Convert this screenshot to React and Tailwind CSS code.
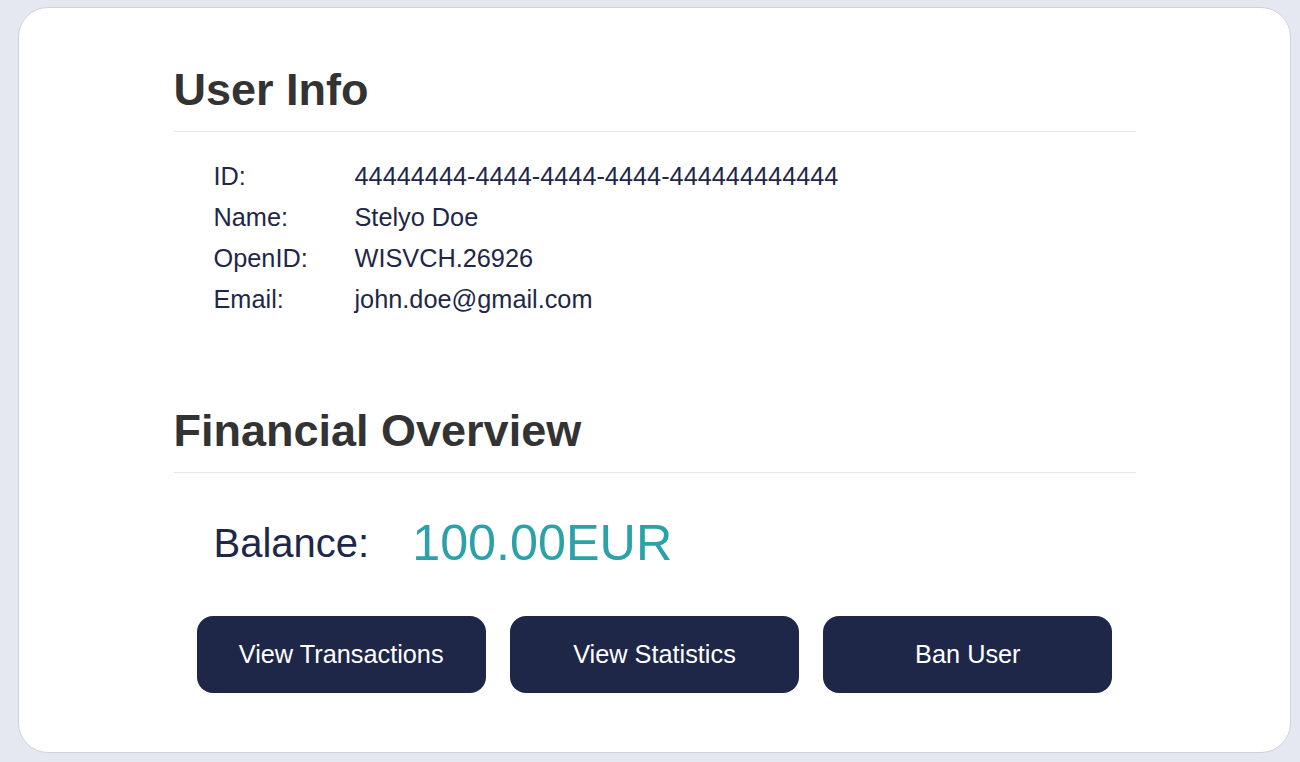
const userRows = [
  { label: 'ID:', value: '44444444-4444-4444-4444-444444444444' },
  { label: 'Name:', value: 'Stelyo Doe' },
  { label: 'OpenID:', value: 'WISVCH.26926' },
  { label: 'Email:', value: 'john.doe@gmail.com' },
];

const actions = ['View Transactions', 'View Statistics', 'Ban User'];

function SectionTitle({ children }) {
  return (
    <h2 className="border-b border-[#e4e7ec] pb-[15px] text-[45px] font-bold leading-[52px] text-[#333333]">
      {children}
    </h2>
  );
}

export default function App() {
  return (
    <div
      className="h-[762px] w-[1300px] overflow-hidden bg-[#e5e8f0] pb-[9px] pl-[18px] pr-[9px] pt-[7px]"
      style={{ fontFamily: '"Liberation Sans", Arial, sans-serif' }}
    >
      <div className="h-[746px] rounded-[30px] border border-[#cfd3da] bg-white pt-[56px]">
        <div className="mx-auto w-[962px]">
          <SectionTitle>User Info</SectionTitle>
          <div className="mt-[24px] pl-[40px] text-[25.3px] leading-[41px] text-[#1f2749]">
            {userRows.map((row) => (
              <div key={row.label} className="flex">
                <span className="w-[141px] shrink-0">{row.label}</span>
                <span>{row.value}</span>
              </div>
            ))}
          </div>

          <div className="mt-[85px]">
            <SectionTitle>Financial Overview</SectionTitle>
          </div>

          <div className="mt-[32px] flex items-center gap-[43px] pl-[40px]">
            <span className="text-[40px] text-[#1f2749]">Balance:</span>
            <span className="text-[50.3px] text-[#2ca1a9]">100.00EUR</span>
          </div>

          <div className="mt-[36px] flex gap-6 px-[23px]">
            {actions.map((label) => (
              <button
                key={label}
                className="h-[77px] flex-1 rounded-2xl bg-[#1f2749] text-[25.3px] text-white"
              >
                {label}
              </button>
            ))}
          </div>
        </div>
      </div>
    </div>
  );
}
